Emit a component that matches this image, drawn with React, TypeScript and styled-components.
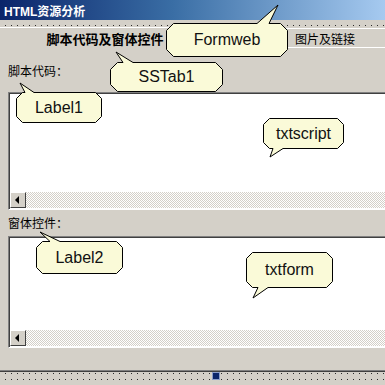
import React from 'react';
import styled, {createGlobalStyle} from 'styled-components';

const GlobalStyle = createGlobalStyle`
  html, body {
    margin: 0;
    padding: 0;
    background: #d4d0c8;
  }
`;

const Window = styled.div`
  position: relative;
  width: 385px;
  height: 385px;
  overflow: hidden;
  display: flex;
  flex-direction: column;
  font-family: "Liberation Sans", "Noto Sans CJK SC", sans-serif;
  background: #d4d0c8;
`;

const TitleBar = styled.div`
  height: 20px;
  flex: none;
  display: flex;
  align-items: center;
  padding-left: 4px;
  background: linear-gradient(90deg, #0a246a 0%, #3a6ea5 45%, #a6caf0 100%);
  color: #fff;
  font-size: 12px;
  font-weight: bold;
`;

// design-time grid of the form
const Designer = styled.div`
  flex: 1;
  padding-top: 7px;
  background:
    linear-gradient(90deg, #d4d0c8 5px, transparent 0) 0 0 / 6px 6px,
    linear-gradient(#d4d0c8 5px, #2a2a2a 0) 0 0 / 6px 6px;
`;

const TabControl = styled.div`
  width: 440px;
  margin-left: -5px;
`;

const TabStrip = styled.div`
  display: flex;
  height: 21px;
`;

const Tab = styled.div<{ $active?: boolean }>`
  width: 222px;
  box-sizing: border-box;
  display: flex;
  align-items: center;
  justify-content: center;
  background: #d4d0c8;
  border-top: 1px solid #fff;
  border-left: 1px solid #fff;
  border-right: 1px solid #404040;
  border-bottom: ${p => (p.$active ? 'none' : '1px solid #fff')};
  font-size: ${p => (p.$active ? '13px' : '12px')};
  font-weight: ${p => (p.$active ? 'bold' : 'normal')};
  color: #000;
  margin-top: ${p => (p.$active ? '0' : '1px')};
`;

const Panel = styled.div`
  height: 324px;
  box-sizing: border-box;
  padding: 17px 0 0 13px;
  background: #d4d0c8;
  border-bottom: 1px solid #404040;
  box-shadow: inset 0 -1px 0 #808080;
  display: flex;
  flex-direction: column;
`;

const FieldLabel = styled.div<{ $gap: number }>`
  height: 14px;
  line-height: 14px;
  margin-top: ${p => p.$gap}px;
  font-size: 12px;
  color: #000;
`;

const TextBox = styled.div<{ $gap: number; $body: number }>`
  margin-top: ${p => p.$gap}px;
  display: flex;
  flex-direction: column;
  border-top: 1px solid #808080;
  border-left: 1px solid #808080;
  border-bottom: 1px solid #fff;
  box-shadow: inset 1px 1px 0 #404040;
  padding: 1px 0 1px 1px;
  background: #fff;

  > .body {
    height: ${p => p.$body}px;
    background: #fff;
  }
`;

const HScroll = styled.div`
  height: 16px;
  display: flex;
  background: repeating-conic-gradient(#fff 0 25%, #d4d0c8 0 50%) 0 0 / 2px 2px;
`;

const ArrowButton = styled.div`
  width: 16px;
  height: 16px;
  box-sizing: border-box;
  background: #d4d0c8;
  border-top: 1px solid #fff;
  border-left: 1px solid #fff;
  border-right: 1px solid #404040;
  border-bottom: 1px solid #404040;
  display: flex;
  align-items: center;
  justify-content: center;

  &::before {
    content: "";
    width: 0;
    height: 0;
    border-top: 4px solid transparent;
    border-bottom: 4px solid transparent;
    border-right: 4px solid #000;
    margin-left: -2px;
  }
`;

const Handle = styled.div`
  position: absolute;
  left: 213px;
  top: 373px;
  width: 6px;
  height: 6px;
  background: #0a246a;
  outline: 1px solid #8a9cc8;
`;

const BalloonBox = styled.div`
  position: absolute;
  display: flex;
  align-items: center;
  justify-content: center;
  font-family: "Liberation Sans", Arial, sans-serif;
  font-size: 16px;
  color: #111;

  > svg {
    position: absolute;
    left: 0;
    top: 0;
    overflow: visible;
  }

  > span {
    position: relative;
  }
`;

type Tail = { edge: 'top' | 'bottom'; a: number; b: number; tx: number; ty: number };

function Balloon({x, y, w, h, c, tail, text}: { x: number; y: number; w: number; h: number; c: number; tail: Tail; text: string }) {
    const r = w - 0.5;
    const bt = h - 0.5;
    const l = 0.5;
    const t = 0.5;
    const a = tail.a - x;
    const b = tail.b - x;
    const tx = tail.tx - x;
    const ty = tail.ty - y;
    const top = tail.edge === 'top'
        ? `L${a},${t} L${tx},${ty} L${b},${t} `
        : '';
    const bottom = tail.edge === 'bottom'
        ? `L${b},${bt} L${tx},${ty} L${a},${bt} `
        : '';
    const d = `M${l + c},${t} ${top}L${r - c},${t} L${r},${t + c} L${r},${bt - c} L${r - c},${bt} ${bottom}L${l + c},${bt} L${l},${bt - c} L${l},${t + c} Z`;
    return (
        <BalloonBox style={{left: x, top: y, width: w, height: h}}>
            <svg width={w} height={h}>
                <path d={d} fill="#fafad8" stroke="#000" strokeWidth={1}/>
            </svg>
            <span>{text}</span>
        </BalloonBox>
    );
}

function ScriptBox({gap, body}: { gap: number; body: number }) {
    return (
        <TextBox $gap={gap} $body={body}>
            <div className="body"/>
            <HScroll>
                <ArrowButton/>
            </HScroll>
        </TextBox>
    );
}

export default function App() {
    return (
        <>
            <GlobalStyle/>
            <Window>
                <TitleBar>HTML资源分析</TitleBar>
                <Designer>
                    <TabControl>
                        <TabStrip>
                            <Tab $active>脚本代码及窗体控件</Tab>
                            <Tab>图片及链接</Tab>
                        </TabStrip>
                        <Panel>
                            <FieldLabel $gap={0}>脚本代码：</FieldLabel>
                            <ScriptBox gap={13} body={98}/>
                            <FieldLabel $gap={7}>窗体控件：</FieldLabel>
                            <ScriptBox gap={5} body={92}/>
                        </Panel>
                    </TabControl>
                </Designer>
                <Handle/>

                <Balloon x={166} y={23} w={122} h={34} c={7} text="Formweb"
                         tail={{edge: 'top', a: 257, b: 269, tx: 278, ty: 5}}/>
                <Balloon x={110} y={62} w={113} h={30} c={7} text="SSTab1"
                         tail={{edge: 'top', a: 123, b: 133, tx: 116, ty: 52}}/>
                <Balloon x={16} y={92} w={86} h={31} c={6} text="Label1"
                         tail={{edge: 'top', a: 25, b: 34, tx: 20, ty: 83}}/>
                <Balloon x={263} y={118} w={81} h={31} c={6} text="txtscript"
                         tail={{edge: 'bottom', a: 273, b: 283, tx: 270, ty: 157}}/>
                <Balloon x={36} y={241} w={87} h={33} c={6} text="Label2"
                         tail={{edge: 'top', a: 50, b: 60, tx: 40, ty: 232}}/>
                <Balloon x={246} y={252} w={87} h={36} c={6} text="txtform"
                         tail={{edge: 'bottom', a: 258, b: 268, tx: 253, ty: 298}}/>
            </Window>
        </>
    );
}
